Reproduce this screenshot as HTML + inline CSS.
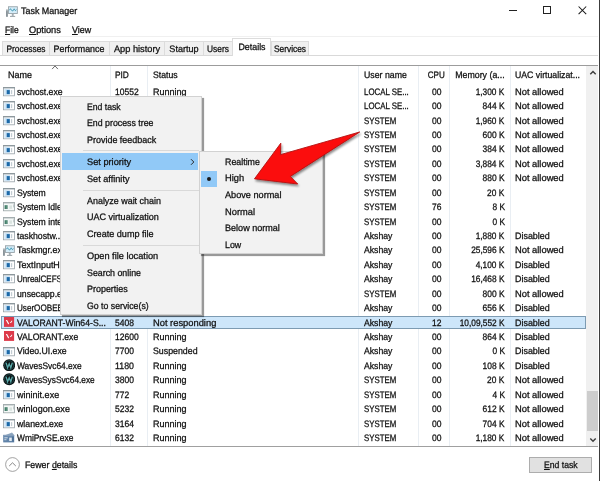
<!DOCTYPE html>
<html><head><meta charset="utf-8"><title>Task Manager</title>
<style>
html,body{margin:0;padding:0}
body{width:600px;height:481px;position:relative;overflow:hidden;background:#fff;font-family:"Liberation Sans",sans-serif;color:#000}
.t{position:absolute;white-space:nowrap;line-height:1em;color:#111;-webkit-text-stroke:0.28px #111;text-rendering:geometricPrecision}
.ic{position:absolute}
.abs{position:absolute}
u{text-decoration:underline;text-underline-offset:1px;text-decoration-thickness:0.8px}
.tab{position:absolute;box-sizing:border-box;background:#f0f0f0;border:1px solid #dcdcdc;border-bottom:none}
.vl{position:absolute;width:1px;background:#e9eef3}
.sep{position:absolute;height:1px;background:#d9d9d9}
</style></head><body>

<div class="abs" style="left:599px;top:0;width:1px;height:481px;background:#3c3c3c"></div>
<svg class="ic" style="left:4.9px;top:6px" width="13" height="12" viewBox="0 0 13 12"><rect x="3.45" y="0.75" width="8.9" height="6.7" fill="#d4ecf8" stroke="#98a3a9" stroke-width="0.9"/><path d="M4.3 4.3 L5.5 2.7 L6.7 4.5 L7.8 5 L9.2 2.8 L10.4 4.7 L11.5 3.6" fill="none" stroke="#2a8aa8" stroke-width="0.8"/><rect x="6.8" y="7.9" width="1.9" height="2" fill="#a3adb2"/><rect x="5" y="9.9" width="5.2" height="0.9" fill="#8d979c"/><rect x="1" y="3.6" width="1.9" height="7.2" fill="#8a949a"/><rect x="1.4" y="4.4" width="1.1" height="0.7" fill="#dfe5e8"/></svg>
<span class="t " style="left:21.1px;top:6px;font-size:9.4px;transform:scaleX(0.953);transform-origin:0 0;">Task Manager</span>
<div class="abs" style="left:509px;top:9.6px;width:8px;height:1px;background:#222"></div>
<div class="abs" style="left:542.8px;top:6px;width:8px;height:8px;box-sizing:border-box;border:1px solid #222"></div>
<svg class="ic" style="left:577.6px;top:5.8px" width="9" height="9" viewBox="0 0 9 9"><path d="M0.6 0.5 L8.2 8.1 M8.2 0.5 L0.6 8.1" stroke="#1a1a1a" stroke-width="1.05" fill="none"/></svg>
<span class="t " style="left:4.6px;top:25px;font-size:9.4px;transform:scaleX(0.901);transform-origin:0 0;"><u>F</u>ile</span>
<span class="t " style="left:29.2px;top:25px;font-size:9.4px;transform:scaleX(0.985);transform-origin:0 0;"><u>O</u>ptions</span>
<span class="t " style="left:71.7px;top:25px;font-size:9.4px;transform:scaleX(0.952);transform-origin:0 0;"><u>V</u>iew</span>
<div class="abs" style="left:0;top:35.6px;width:598px;height:1px;background:#f0f0f0"></div>
<div class="abs" style="left:0;top:55px;width:598px;height:1px;background:#d9d9d9"></div>
<div class="tab" style="left:2px;top:40.5px;width:47.5px;height:14.6px"></div>
<span class="t " style="left:-74.25px;width:200px;text-align:center;top:44px;font-size:9.4px;transform:scaleX(0.889);transform-origin:50% 0;">Processes</span>
<div class="tab" style="left:48.5px;top:40.5px;width:61.5px;height:14.6px"></div>
<span class="t " style="left:-20.75px;width:200px;text-align:center;top:44px;font-size:9.4px;transform:scaleX(0.949);transform-origin:50% 0;">Performance</span>
<div class="tab" style="left:109px;top:40.5px;width:56px;height:14.6px"></div>
<span class="t " style="left:37.0px;width:200px;text-align:center;top:44px;font-size:9.4px;transform:scaleX(0.986);transform-origin:50% 0;">App history</span>
<div class="tab" style="left:164px;top:40.5px;width:39.69999999999999px;height:14.6px"></div>
<span class="t " style="left:83.85px;width:200px;text-align:center;top:44px;font-size:9.4px;transform:scaleX(0.968);transform-origin:50% 0;">Startup</span>
<div class="tab" style="left:202.7px;top:40.5px;width:31.0px;height:14.6px"></div>
<span class="t " style="left:118.19999999999999px;width:200px;text-align:center;top:44px;font-size:9.4px;transform:scaleX(0.894);transform-origin:50% 0;">Users</span>
<div class="tab" style="left:232.2px;top:38.3px;width:39.30000000000001px;height:17.8px;background:#fff"></div>
<span class="t " style="left:152.1px;width:200px;text-align:center;top:42px;font-size:9.4px;transform:scaleX(0.946);transform-origin:50% 0;">Details</span>
<div class="tab" style="left:270.5px;top:40.5px;width:38.0px;height:14.6px"></div>
<span class="t " style="left:189.5px;width:200px;text-align:center;top:44px;font-size:9.4px;transform:scaleX(0.894);transform-origin:50% 0;">Services</span>
<div class="abs" style="left:0;top:65px;width:598px;height:1px;background:#9c9c9c"></div>
<div class="abs" style="left:0;top:446px;width:598px;height:1px;background:#a0a0a0"></div>
<div class="vl" style="left:110px;top:65.6px;height:380px"></div>
<div class="vl" style="left:147.4px;top:65.6px;height:380px"></div>
<div class="vl" style="left:358px;top:65.6px;height:380px"></div>
<div class="vl" style="left:418px;top:65.6px;height:380px"></div>
<div class="vl" style="left:449.4px;top:65.6px;height:380px"></div>
<div class="vl" style="left:510px;top:65.6px;height:380px"></div>
<span class="t " style="left:8px;top:70px;font-size:9.4px;transform:scaleX(0.960);transform-origin:0 0;">Name</span>
<span class="t " style="left:115px;top:70px;font-size:9.4px;transform:scaleX(0.889);transform-origin:0 0;">PID</span>
<span class="t " style="left:153px;top:70px;font-size:9.4px;transform:scaleX(0.927);transform-origin:0 0;">Status</span>
<span class="t " style="left:363.6px;top:70px;font-size:9.4px;transform:scaleX(0.935);transform-origin:0 0;">User name</span>
<span class="t " style="right:155.39999999999998px;top:70px;font-size:9.4px;transform:scaleX(0.859);transform-origin:100% 0;">CPU</span>
<span class="t " style="right:95.39999999999998px;top:70px;font-size:9.4px;transform:scaleX(0.939);transform-origin:100% 0;">Memory (a...</span>
<span class="t " style="left:515.4px;top:70px;font-size:9.4px;transform:scaleX(0.931);transform-origin:0 0;">UAC virtualizat...</span>
<svg class="ic" style="left:51.1px;top:65px" width="8" height="5" viewBox="0 0 8 5"><path d="M1.1 4.1 L4 0.9 L6.9 4.1" stroke="#6a6a6a" stroke-width="1" fill="none"/></svg>
<div class="abs" style="left:585.5px;top:65.6px;width:12.7px;height:380.4px;background:#f0f0f0"></div>
<div class="abs" style="left:587.2px;top:391.4px;width:10.6px;height:39.8px;background:#cdcdcd"></div>
<svg class="ic" style="left:588.9px;top:70.2px" width="8" height="6" viewBox="0 0 8 6"><path d="M1.3 4.2 L4 1.4 L6.7 4.2" stroke="#3c3c3c" stroke-width="1.4" fill="none"/></svg>
<svg class="ic" style="left:588.7px;top:436.9px" width="8" height="6" viewBox="0 0 8 6"><path d="M1.3 1.4 L4 4.2 L6.7 1.4" stroke="#3c3c3c" stroke-width="1.4" fill="none"/></svg>
<svg class="ic" style="left:3.1px;top:86.9px" width="12" height="10" viewBox="0 0 12 10"><rect x="0.45" y="0.5" width="11.1" height="8.3" fill="#fff" stroke="#97a1a7" stroke-width="0.8"/><rect x="0.1" y="0.1" width="11.8" height="1.3" fill="#8a959b"/><rect x="1.3" y="1.9" width="5.6" height="6.3" fill="#cfe5f6"/><rect x="3.7" y="3.1" width="3.1" height="4" fill="#1c69a8"/><rect x="7.9" y="3.1" width="1.3" height="4" fill="#c3ccd2"/></svg>
<span class="t " style="left:17px;top:87px;font-size:9.4px;transform:scaleX(0.919);transform-origin:0 0;">svchost.exe</span>
<span class="t " style="left:115px;top:87px;font-size:9.4px;transform:scaleX(0.907);transform-origin:0 0;">10552</span>
<span class="t " style="left:153px;top:87px;font-size:9.4px;transform:scaleX(0.961);transform-origin:0 0;">Running</span>
<span class="t " style="left:363.6px;top:87px;font-size:9.4px;transform:scaleX(0.840);transform-origin:0 0;">LOCAL SE...</span>
<span class="t " style="right:158.60000000000002px;top:87px;font-size:9.4px;transform:scaleX(0.907);transform-origin:100% 0;">00</span>
<span class="t " style="right:95.39999999999998px;top:87px;font-size:9.4px;transform:scaleX(0.887);transform-origin:100% 0;">1,300 K</span>
<span class="t " style="left:515.4px;top:87px;font-size:9.4px;transform:scaleX(0.995);transform-origin:0 0;">Not allowed</span>
<svg class="ic" style="left:3.1px;top:101.33000000000001px" width="12" height="10" viewBox="0 0 12 10"><rect x="0.45" y="0.5" width="11.1" height="8.3" fill="#fff" stroke="#97a1a7" stroke-width="0.8"/><rect x="0.1" y="0.1" width="11.8" height="1.3" fill="#8a959b"/><rect x="1.3" y="1.9" width="5.6" height="6.3" fill="#cfe5f6"/><rect x="3.7" y="3.1" width="3.1" height="4" fill="#1c69a8"/><rect x="7.9" y="3.1" width="1.3" height="4" fill="#c3ccd2"/></svg>
<span class="t " style="left:17px;top:101px;font-size:9.4px;transform:scaleX(0.919);transform-origin:0 0;">svchost.exe</span>
<span class="t " style="left:115px;top:101px;font-size:9.4px;transform:scaleX(0.907);transform-origin:0 0;">10580</span>
<span class="t " style="left:153px;top:101px;font-size:9.4px;transform:scaleX(0.961);transform-origin:0 0;">Running</span>
<span class="t " style="left:363.6px;top:101px;font-size:9.4px;transform:scaleX(0.840);transform-origin:0 0;">LOCAL SE...</span>
<span class="t " style="right:158.60000000000002px;top:101px;font-size:9.4px;transform:scaleX(0.907);transform-origin:100% 0;">00</span>
<span class="t " style="right:95.39999999999998px;top:101px;font-size:9.4px;transform:scaleX(0.897);transform-origin:100% 0;">844 K</span>
<span class="t " style="left:515.4px;top:101px;font-size:9.4px;transform:scaleX(0.995);transform-origin:0 0;">Not allowed</span>
<svg class="ic" style="left:3.1px;top:115.76px" width="12" height="10" viewBox="0 0 12 10"><rect x="0.45" y="0.5" width="11.1" height="8.3" fill="#fff" stroke="#97a1a7" stroke-width="0.8"/><rect x="0.1" y="0.1" width="11.8" height="1.3" fill="#8a959b"/><rect x="1.3" y="1.9" width="5.6" height="6.3" fill="#cfe5f6"/><rect x="3.7" y="3.1" width="3.1" height="4" fill="#1c69a8"/><rect x="7.9" y="3.1" width="1.3" height="4" fill="#c3ccd2"/></svg>
<span class="t " style="left:17px;top:116px;font-size:9.4px;transform:scaleX(0.919);transform-origin:0 0;">svchost.exe</span>
<span class="t " style="left:115px;top:116px;font-size:9.4px;transform:scaleX(0.907);transform-origin:0 0;">10700</span>
<span class="t " style="left:153px;top:116px;font-size:9.4px;transform:scaleX(0.961);transform-origin:0 0;">Running</span>
<span class="t " style="left:363.6px;top:116px;font-size:9.4px;transform:scaleX(0.836);transform-origin:0 0;">SYSTEM</span>
<span class="t " style="right:158.60000000000002px;top:116px;font-size:9.4px;transform:scaleX(0.907);transform-origin:100% 0;">00</span>
<span class="t " style="right:95.39999999999998px;top:116px;font-size:9.4px;transform:scaleX(0.887);transform-origin:100% 0;">1,960 K</span>
<span class="t " style="left:515.4px;top:116px;font-size:9.4px;transform:scaleX(0.995);transform-origin:0 0;">Not allowed</span>
<svg class="ic" style="left:3.1px;top:130.19px" width="12" height="10" viewBox="0 0 12 10"><rect x="0.45" y="0.5" width="11.1" height="8.3" fill="#fff" stroke="#97a1a7" stroke-width="0.8"/><rect x="0.1" y="0.1" width="11.8" height="1.3" fill="#8a959b"/><rect x="1.3" y="1.9" width="5.6" height="6.3" fill="#cfe5f6"/><rect x="3.7" y="3.1" width="3.1" height="4" fill="#1c69a8"/><rect x="7.9" y="3.1" width="1.3" height="4" fill="#c3ccd2"/></svg>
<span class="t " style="left:17px;top:130px;font-size:9.4px;transform:scaleX(0.919);transform-origin:0 0;">svchost.exe</span>
<span class="t " style="left:115px;top:130px;font-size:9.4px;transform:scaleX(0.907);transform-origin:0 0;">10812</span>
<span class="t " style="left:153px;top:130px;font-size:9.4px;transform:scaleX(0.961);transform-origin:0 0;">Running</span>
<span class="t " style="left:363.6px;top:130px;font-size:9.4px;transform:scaleX(0.836);transform-origin:0 0;">SYSTEM</span>
<span class="t " style="right:158.60000000000002px;top:130px;font-size:9.4px;transform:scaleX(0.907);transform-origin:100% 0;">00</span>
<span class="t " style="right:95.39999999999998px;top:130px;font-size:9.4px;transform:scaleX(0.897);transform-origin:100% 0;">600 K</span>
<span class="t " style="left:515.4px;top:130px;font-size:9.4px;transform:scaleX(0.995);transform-origin:0 0;">Not allowed</span>
<svg class="ic" style="left:3.1px;top:144.62px" width="12" height="10" viewBox="0 0 12 10"><rect x="0.45" y="0.5" width="11.1" height="8.3" fill="#fff" stroke="#97a1a7" stroke-width="0.8"/><rect x="0.1" y="0.1" width="11.8" height="1.3" fill="#8a959b"/><rect x="1.3" y="1.9" width="5.6" height="6.3" fill="#cfe5f6"/><rect x="3.7" y="3.1" width="3.1" height="4" fill="#1c69a8"/><rect x="7.9" y="3.1" width="1.3" height="4" fill="#c3ccd2"/></svg>
<span class="t " style="left:17px;top:144px;font-size:9.4px;transform:scaleX(0.919);transform-origin:0 0;">svchost.exe</span>
<span class="t " style="left:115px;top:144px;font-size:9.4px;transform:scaleX(0.932);transform-origin:0 0;">11024</span>
<span class="t " style="left:153px;top:144px;font-size:9.4px;transform:scaleX(0.961);transform-origin:0 0;">Running</span>
<span class="t " style="left:363.6px;top:144px;font-size:9.4px;transform:scaleX(0.836);transform-origin:0 0;">SYSTEM</span>
<span class="t " style="right:158.60000000000002px;top:144px;font-size:9.4px;transform:scaleX(0.907);transform-origin:100% 0;">00</span>
<span class="t " style="right:95.39999999999998px;top:144px;font-size:9.4px;transform:scaleX(0.897);transform-origin:100% 0;">384 K</span>
<span class="t " style="left:515.4px;top:144px;font-size:9.4px;transform:scaleX(0.995);transform-origin:0 0;">Not allowed</span>
<svg class="ic" style="left:3.1px;top:159.05px" width="12" height="10" viewBox="0 0 12 10"><rect x="0.45" y="0.5" width="11.1" height="8.3" fill="#fff" stroke="#97a1a7" stroke-width="0.8"/><rect x="0.1" y="0.1" width="11.8" height="1.3" fill="#8a959b"/><rect x="1.3" y="1.9" width="5.6" height="6.3" fill="#cfe5f6"/><rect x="3.7" y="3.1" width="3.1" height="4" fill="#1c69a8"/><rect x="7.9" y="3.1" width="1.3" height="4" fill="#c3ccd2"/></svg>
<span class="t " style="left:17px;top:159px;font-size:9.4px;transform:scaleX(0.919);transform-origin:0 0;">svchost.exe</span>
<span class="t " style="left:115px;top:159px;font-size:9.4px;transform:scaleX(0.932);transform-origin:0 0;">11200</span>
<span class="t " style="left:153px;top:159px;font-size:9.4px;transform:scaleX(0.961);transform-origin:0 0;">Running</span>
<span class="t " style="left:363.6px;top:159px;font-size:9.4px;transform:scaleX(0.836);transform-origin:0 0;">SYSTEM</span>
<span class="t " style="right:158.60000000000002px;top:159px;font-size:9.4px;transform:scaleX(0.907);transform-origin:100% 0;">00</span>
<span class="t " style="right:95.39999999999998px;top:159px;font-size:9.4px;transform:scaleX(0.887);transform-origin:100% 0;">3,884 K</span>
<span class="t " style="left:515.4px;top:159px;font-size:9.4px;transform:scaleX(0.995);transform-origin:0 0;">Not allowed</span>
<svg class="ic" style="left:3.1px;top:173.48px" width="12" height="10" viewBox="0 0 12 10"><rect x="0.45" y="0.5" width="11.1" height="8.3" fill="#fff" stroke="#97a1a7" stroke-width="0.8"/><rect x="0.1" y="0.1" width="11.8" height="1.3" fill="#8a959b"/><rect x="1.3" y="1.9" width="5.6" height="6.3" fill="#cfe5f6"/><rect x="3.7" y="3.1" width="3.1" height="4" fill="#1c69a8"/><rect x="7.9" y="3.1" width="1.3" height="4" fill="#c3ccd2"/></svg>
<span class="t " style="left:17px;top:173px;font-size:9.4px;transform:scaleX(0.919);transform-origin:0 0;">svchost.exe</span>
<span class="t " style="left:115px;top:173px;font-size:9.4px;transform:scaleX(0.932);transform-origin:0 0;">11348</span>
<span class="t " style="left:153px;top:173px;font-size:9.4px;transform:scaleX(0.961);transform-origin:0 0;">Running</span>
<span class="t " style="left:363.6px;top:173px;font-size:9.4px;transform:scaleX(0.836);transform-origin:0 0;">SYSTEM</span>
<span class="t " style="right:158.60000000000002px;top:173px;font-size:9.4px;transform:scaleX(0.907);transform-origin:100% 0;">00</span>
<span class="t " style="right:95.39999999999998px;top:173px;font-size:9.4px;transform:scaleX(0.897);transform-origin:100% 0;">880 K</span>
<span class="t " style="left:515.4px;top:173px;font-size:9.4px;transform:scaleX(0.995);transform-origin:0 0;">Not allowed</span>
<svg class="ic" style="left:3.1px;top:187.91px" width="12" height="10" viewBox="0 0 12 10"><rect x="0.45" y="0.5" width="11.1" height="8.3" fill="#fff" stroke="#97a1a7" stroke-width="0.8"/><rect x="0.1" y="0.1" width="11.8" height="1.3" fill="#8a959b"/><rect x="1.3" y="1.9" width="5.6" height="6.3" fill="#cfe5f6"/><rect x="3.7" y="3.1" width="3.1" height="4" fill="#1c69a8"/><rect x="7.9" y="3.1" width="1.3" height="4" fill="#c3ccd2"/></svg>
<span class="t " style="left:17px;top:188px;font-size:9.4px;transform:scaleX(0.919);transform-origin:0 0;">System</span>
<span class="t " style="left:115px;top:188px;font-size:9.4px;transform:scaleX(0.907);transform-origin:0 0;">4</span>
<span class="t " style="left:153px;top:188px;font-size:9.4px;transform:scaleX(0.961);transform-origin:0 0;">Running</span>
<span class="t " style="left:363.6px;top:188px;font-size:9.4px;transform:scaleX(0.836);transform-origin:0 0;">SYSTEM</span>
<span class="t " style="right:158.60000000000002px;top:188px;font-size:9.4px;transform:scaleX(0.907);transform-origin:100% 0;">00</span>
<span class="t " style="right:95.39999999999998px;top:188px;font-size:9.4px;transform:scaleX(0.893);transform-origin:100% 0;">20 K</span>
<svg class="ic" style="left:3.1px;top:202.34px" width="12" height="10" viewBox="0 0 12 10"><rect x="0.45" y="0.5" width="11.1" height="8.3" fill="#f4f8f7" stroke="#9aa3a6" stroke-width="0.8"/><rect x="0.1" y="0.1" width="11.8" height="1.3" fill="#a3acaf"/><rect x="1.6" y="3.2" width="3" height="3.8" fill="#3f7a66"/><rect x="2.9" y="3.2" width="0.5" height="3.8" fill="#7fb09c"/><rect x="6.4" y="3.4" width="2.6" height="3.4" fill="#d9e3df"/><rect x="10" y="2.4" width="0.8" height="3" fill="#b8c2c4"/></svg>
<span class="t " style="left:17px;top:202px;font-size:9.4px;transform:scaleX(0.914);transform-origin:0 0;">System Idle...</span>
<span class="t " style="left:115px;top:202px;font-size:9.4px;transform:scaleX(0.907);transform-origin:0 0;">0</span>
<span class="t " style="left:153px;top:202px;font-size:9.4px;transform:scaleX(0.961);transform-origin:0 0;">Running</span>
<span class="t " style="left:363.6px;top:202px;font-size:9.4px;transform:scaleX(0.836);transform-origin:0 0;">SYSTEM</span>
<span class="t " style="right:158.60000000000002px;top:202px;font-size:9.4px;transform:scaleX(0.907);transform-origin:100% 0;">76</span>
<span class="t " style="right:95.39999999999998px;top:202px;font-size:9.4px;transform:scaleX(0.888);transform-origin:100% 0;">8 K</span>
<svg class="ic" style="left:3.1px;top:216.77px" width="12" height="10" viewBox="0 0 12 10"><rect x="0.45" y="0.5" width="11.1" height="8.3" fill="#f4f8f7" stroke="#9aa3a6" stroke-width="0.8"/><rect x="0.1" y="0.1" width="11.8" height="1.3" fill="#a3acaf"/><rect x="1.6" y="3.2" width="3" height="3.8" fill="#3f7a66"/><rect x="2.9" y="3.2" width="0.5" height="3.8" fill="#7fb09c"/><rect x="6.4" y="3.4" width="2.6" height="3.4" fill="#d9e3df"/><rect x="10" y="2.4" width="0.8" height="3" fill="#b8c2c4"/></svg>
<span class="t " style="left:17px;top:217px;font-size:9.4px;transform:scaleX(0.922);transform-origin:0 0;">System inte...</span>
<span class="t " style="left:115px;top:217px;font-size:9.4px;transform:scaleX(1.165);transform-origin:0 0;">-</span>
<span class="t " style="left:153px;top:217px;font-size:9.4px;transform:scaleX(0.961);transform-origin:0 0;">Running</span>
<span class="t " style="left:363.6px;top:217px;font-size:9.4px;transform:scaleX(0.836);transform-origin:0 0;">SYSTEM</span>
<span class="t " style="right:158.60000000000002px;top:217px;font-size:9.4px;transform:scaleX(0.907);transform-origin:100% 0;">00</span>
<span class="t " style="right:95.39999999999998px;top:217px;font-size:9.4px;transform:scaleX(0.888);transform-origin:100% 0;">0 K</span>
<svg class="ic" style="left:3.1px;top:231.20000000000002px" width="12" height="10" viewBox="0 0 12 10"><rect x="0.45" y="0.5" width="11.1" height="8.3" fill="#fff" stroke="#97a1a7" stroke-width="0.8"/><rect x="0.1" y="0.1" width="11.8" height="1.3" fill="#8a959b"/><rect x="1.3" y="1.9" width="5.6" height="6.3" fill="#cfe5f6"/><rect x="3.7" y="3.1" width="3.1" height="4" fill="#1c69a8"/><rect x="7.9" y="3.1" width="1.3" height="4" fill="#c3ccd2"/></svg>
<span class="t " style="left:17px;top:231px;font-size:9.4px;transform:scaleX(0.930);transform-origin:0 0;">taskhostw....</span>
<span class="t " style="left:115px;top:231px;font-size:9.4px;transform:scaleX(0.907);transform-origin:0 0;">6044</span>
<span class="t " style="left:153px;top:231px;font-size:9.4px;transform:scaleX(0.961);transform-origin:0 0;">Running</span>
<span class="t " style="left:363.6px;top:231px;font-size:9.4px;transform:scaleX(0.924);transform-origin:0 0;">Akshay</span>
<span class="t " style="right:158.60000000000002px;top:231px;font-size:9.4px;transform:scaleX(0.907);transform-origin:100% 0;">00</span>
<span class="t " style="right:95.39999999999998px;top:231px;font-size:9.4px;transform:scaleX(0.887);transform-origin:100% 0;">1,880 K</span>
<span class="t " style="left:515.4px;top:231px;font-size:9.4px;transform:scaleX(0.952);transform-origin:0 0;">Disabled</span>
<svg class="ic" style="left:2.3px;top:245.42999999999998px" width="13" height="12" viewBox="0 0 13 12"><rect x="3.45" y="0.75" width="8.9" height="6.7" fill="#d4ecf8" stroke="#98a3a9" stroke-width="0.9"/><path d="M4.3 4.3 L5.5 2.7 L6.7 4.5 L7.8 5 L9.2 2.8 L10.4 4.7 L11.5 3.6" fill="none" stroke="#2a8aa8" stroke-width="0.8"/><rect x="6.8" y="7.9" width="1.9" height="2" fill="#a3adb2"/><rect x="5" y="9.9" width="5.2" height="0.9" fill="#8d979c"/><rect x="1" y="3.6" width="1.9" height="7.2" fill="#8a949a"/><rect x="1.4" y="4.4" width="1.1" height="0.7" fill="#dfe5e8"/></svg>
<span class="t " style="left:17px;top:245px;font-size:9.4px;transform:scaleX(0.946);transform-origin:0 0;">Taskmgr.exe</span>
<span class="t " style="left:115px;top:245px;font-size:9.4px;transform:scaleX(0.907);transform-origin:0 0;">9120</span>
<span class="t " style="left:153px;top:245px;font-size:9.4px;transform:scaleX(0.961);transform-origin:0 0;">Running</span>
<span class="t " style="left:363.6px;top:245px;font-size:9.4px;transform:scaleX(0.924);transform-origin:0 0;">Akshay</span>
<span class="t " style="right:158.60000000000002px;top:245px;font-size:9.4px;transform:scaleX(0.907);transform-origin:100% 0;">00</span>
<span class="t " style="right:95.39999999999998px;top:245px;font-size:9.4px;transform:scaleX(0.890);transform-origin:100% 0;">25,596 K</span>
<span class="t " style="left:515.4px;top:245px;font-size:9.4px;transform:scaleX(0.995);transform-origin:0 0;">Not allowed</span>
<svg class="ic" style="left:3.1px;top:260.05999999999995px" width="12" height="10" viewBox="0 0 12 10"><rect x="0.45" y="0.5" width="11.1" height="8.3" fill="#fff" stroke="#97a1a7" stroke-width="0.8"/><rect x="0.1" y="0.1" width="11.8" height="1.3" fill="#8a959b"/><rect x="1.3" y="1.9" width="5.6" height="6.3" fill="#cfe5f6"/><rect x="3.7" y="3.1" width="3.1" height="4" fill="#1c69a8"/><rect x="7.9" y="3.1" width="1.3" height="4" fill="#c3ccd2"/></svg>
<span class="t " style="left:17px;top:260px;font-size:9.4px;transform:scaleX(0.956);transform-origin:0 0;">TextInputH...</span>
<span class="t " style="left:115px;top:260px;font-size:9.4px;transform:scaleX(0.907);transform-origin:0 0;">8812</span>
<span class="t " style="left:153px;top:260px;font-size:9.4px;transform:scaleX(0.961);transform-origin:0 0;">Running</span>
<span class="t " style="left:363.6px;top:260px;font-size:9.4px;transform:scaleX(0.924);transform-origin:0 0;">Akshay</span>
<span class="t " style="right:158.60000000000002px;top:260px;font-size:9.4px;transform:scaleX(0.907);transform-origin:100% 0;">00</span>
<span class="t " style="right:95.39999999999998px;top:260px;font-size:9.4px;transform:scaleX(0.887);transform-origin:100% 0;">4,100 K</span>
<span class="t " style="left:515.4px;top:260px;font-size:9.4px;transform:scaleX(0.952);transform-origin:0 0;">Disabled</span>
<svg class="ic" style="left:3.1px;top:274.49px" width="12" height="10" viewBox="0 0 12 10"><rect x="0.45" y="0.5" width="11.1" height="8.3" fill="#fff" stroke="#97a1a7" stroke-width="0.8"/><rect x="0.1" y="0.1" width="11.8" height="1.3" fill="#8a959b"/><rect x="1.3" y="1.9" width="5.6" height="6.3" fill="#cfe5f6"/><rect x="3.7" y="3.1" width="3.1" height="4" fill="#1c69a8"/><rect x="7.9" y="3.1" width="1.3" height="4" fill="#c3ccd2"/></svg>
<span class="t " style="left:17px;top:274px;font-size:9.4px;transform:scaleX(0.853);transform-origin:0 0;">UnrealCEFS...</span>
<span class="t " style="left:115px;top:274px;font-size:9.4px;transform:scaleX(0.907);transform-origin:0 0;">7420</span>
<span class="t " style="left:153px;top:274px;font-size:9.4px;transform:scaleX(0.961);transform-origin:0 0;">Running</span>
<span class="t " style="left:363.6px;top:274px;font-size:9.4px;transform:scaleX(0.924);transform-origin:0 0;">Akshay</span>
<span class="t " style="right:158.60000000000002px;top:274px;font-size:9.4px;transform:scaleX(0.907);transform-origin:100% 0;">00</span>
<span class="t " style="right:95.39999999999998px;top:274px;font-size:9.4px;transform:scaleX(0.890);transform-origin:100% 0;">16,468 K</span>
<span class="t " style="left:515.4px;top:274px;font-size:9.4px;transform:scaleX(0.952);transform-origin:0 0;">Disabled</span>
<svg class="ic" style="left:3.1px;top:288.91999999999996px" width="12" height="10" viewBox="0 0 12 10"><rect x="0.45" y="0.5" width="11.1" height="8.3" fill="#fff" stroke="#97a1a7" stroke-width="0.8"/><rect x="0.1" y="0.1" width="11.8" height="1.3" fill="#8a959b"/><rect x="1.3" y="1.9" width="5.6" height="6.3" fill="#cfe5f6"/><rect x="3.7" y="3.1" width="3.1" height="4" fill="#1c69a8"/><rect x="7.9" y="3.1" width="1.3" height="4" fill="#c3ccd2"/></svg>
<span class="t " style="left:17px;top:289px;font-size:9.4px;transform:scaleX(0.927);transform-origin:0 0;">unsecapp.exe</span>
<span class="t " style="left:115px;top:289px;font-size:9.4px;transform:scaleX(0.907);transform-origin:0 0;">5120</span>
<span class="t " style="left:153px;top:289px;font-size:9.4px;transform:scaleX(0.961);transform-origin:0 0;">Running</span>
<span class="t " style="left:363.6px;top:289px;font-size:9.4px;transform:scaleX(0.836);transform-origin:0 0;">SYSTEM</span>
<span class="t " style="right:158.60000000000002px;top:289px;font-size:9.4px;transform:scaleX(0.907);transform-origin:100% 0;">00</span>
<span class="t " style="right:95.39999999999998px;top:289px;font-size:9.4px;transform:scaleX(0.897);transform-origin:100% 0;">800 K</span>
<span class="t " style="left:515.4px;top:289px;font-size:9.4px;transform:scaleX(0.995);transform-origin:0 0;">Not allowed</span>
<svg class="ic" style="left:3.1px;top:303.34999999999997px" width="12" height="10" viewBox="0 0 12 10"><rect x="0.45" y="0.5" width="11.1" height="8.3" fill="#fff" stroke="#97a1a7" stroke-width="0.8"/><rect x="0.1" y="0.1" width="11.8" height="1.3" fill="#8a959b"/><rect x="1.3" y="1.9" width="5.6" height="6.3" fill="#cfe5f6"/><rect x="3.7" y="3.1" width="3.1" height="4" fill="#1c69a8"/><rect x="7.9" y="3.1" width="1.3" height="4" fill="#c3ccd2"/></svg>
<span class="t " style="left:17px;top:303px;font-size:9.4px;transform:scaleX(0.865);transform-origin:0 0;">UserOOBEB...</span>
<span class="t " style="left:115px;top:303px;font-size:9.4px;transform:scaleX(0.907);transform-origin:0 0;">9944</span>
<span class="t " style="left:153px;top:303px;font-size:9.4px;transform:scaleX(0.961);transform-origin:0 0;">Running</span>
<span class="t " style="left:363.6px;top:303px;font-size:9.4px;transform:scaleX(0.924);transform-origin:0 0;">Akshay</span>
<span class="t " style="right:158.60000000000002px;top:303px;font-size:9.4px;transform:scaleX(0.907);transform-origin:100% 0;">00</span>
<span class="t " style="right:95.39999999999998px;top:303px;font-size:9.4px;transform:scaleX(0.897);transform-origin:100% 0;">656 K</span>
<span class="t " style="left:515.4px;top:303px;font-size:9.4px;transform:scaleX(0.952);transform-origin:0 0;">Disabled</span>
<div class="abs" style="left:1px;top:316px;width:584.8px;height:12.9px;box-sizing:border-box;background:#cde6fa;border:1px solid #7d9bb2"></div>
<svg class="ic" style="left:4px;top:316.97999999999996px" width="11" height="11" viewBox="0 0 11 11"><rect x="0" y="0" width="10.1" height="9.9" fill="#dd3a4a"/><path d="M1.8 3 L3.1 3 L5.1 6.5 L4.3 7.5 Z M8.1 3.3 L8.1 4.7 L6.9 6.1 L5.8 5.9 Z" fill="#fff"/></svg>
<span class="t " style="left:17px;top:318px;font-size:9.4px;transform:scaleX(0.924);transform-origin:0 0;">VALORANT-Win64-S...</span>
<span class="t " style="left:115px;top:318px;font-size:9.4px;transform:scaleX(0.907);transform-origin:0 0;">5408</span>
<span class="t " style="left:153px;top:318px;font-size:9.4px;transform:scaleX(0.996);transform-origin:0 0;">Not responding</span>
<span class="t " style="left:363.6px;top:318px;font-size:9.4px;transform:scaleX(0.924);transform-origin:0 0;">Akshay</span>
<span class="t " style="right:158.60000000000002px;top:318px;font-size:9.4px;transform:scaleX(0.907);transform-origin:100% 0;">12</span>
<span class="t " style="right:95.39999999999998px;top:318px;font-size:9.4px;transform:scaleX(0.887);transform-origin:100% 0;">10,09,552 K</span>
<span class="t " style="left:515.4px;top:318px;font-size:9.4px;transform:scaleX(0.952);transform-origin:0 0;">Disabled</span>
<svg class="ic" style="left:4px;top:331.40999999999997px" width="11" height="11" viewBox="0 0 11 11"><rect x="0" y="0" width="10.1" height="9.9" fill="#dd3a4a"/><path d="M1.8 3 L3.1 3 L5.1 6.5 L4.3 7.5 Z M8.1 3.3 L8.1 4.7 L6.9 6.1 L5.8 5.9 Z" fill="#fff"/></svg>
<span class="t " style="left:17px;top:332px;font-size:9.4px;transform:scaleX(0.920);transform-origin:0 0;">VALORANT.exe</span>
<span class="t " style="left:115px;top:332px;font-size:9.4px;transform:scaleX(0.907);transform-origin:0 0;">12600</span>
<span class="t " style="left:153px;top:332px;font-size:9.4px;transform:scaleX(0.961);transform-origin:0 0;">Running</span>
<span class="t " style="left:363.6px;top:332px;font-size:9.4px;transform:scaleX(0.924);transform-origin:0 0;">Akshay</span>
<span class="t " style="right:158.60000000000002px;top:332px;font-size:9.4px;transform:scaleX(0.907);transform-origin:100% 0;">00</span>
<span class="t " style="right:95.39999999999998px;top:332px;font-size:9.4px;transform:scaleX(0.897);transform-origin:100% 0;">864 K</span>
<span class="t " style="left:515.4px;top:332px;font-size:9.4px;transform:scaleX(0.952);transform-origin:0 0;">Disabled</span>
<svg class="ic" style="left:3.1px;top:346.64px" width="12" height="10" viewBox="0 0 12 10"><rect x="0.45" y="0.5" width="11.1" height="8.3" fill="#fff" stroke="#97a1a7" stroke-width="0.8"/><rect x="0.1" y="0.1" width="11.8" height="1.3" fill="#8a959b"/><rect x="1.3" y="1.9" width="5.6" height="6.3" fill="#cfe5f6"/><rect x="3.7" y="3.1" width="3.1" height="4" fill="#1c69a8"/><rect x="7.9" y="3.1" width="1.3" height="4" fill="#c3ccd2"/></svg>
<span class="t " style="left:17px;top:346px;font-size:9.4px;transform:scaleX(0.927);transform-origin:0 0;">Video.UI.exe</span>
<span class="t " style="left:115px;top:346px;font-size:9.4px;transform:scaleX(0.907);transform-origin:0 0;">7700</span>
<span class="t " style="left:153px;top:346px;font-size:9.4px;transform:scaleX(0.939);transform-origin:0 0;">Suspended</span>
<span class="t " style="left:363.6px;top:346px;font-size:9.4px;transform:scaleX(0.924);transform-origin:0 0;">Akshay</span>
<span class="t " style="right:158.60000000000002px;top:346px;font-size:9.4px;transform:scaleX(0.907);transform-origin:100% 0;">00</span>
<span class="t " style="right:95.39999999999998px;top:346px;font-size:9.4px;transform:scaleX(0.888);transform-origin:100% 0;">0 K</span>
<span class="t " style="left:515.4px;top:346px;font-size:9.4px;transform:scaleX(0.952);transform-origin:0 0;">Disabled</span>
<svg class="ic" style="left:2.8px;top:358.97px" width="12.4" height="12.4" viewBox="-6.2 -6.2 12.4 12.4"><circle cx="0" cy="0" r="6" fill="#0b1315"/><circle cx="0" cy="0" r="4.6" fill="none" stroke="#1f484a" stroke-width="0.9"/><path d="M-3.1 -2.4 L-1.6 2.5 L0 -1.5 L1.6 2.5 L3.1 -2.4" fill="none" stroke="#5aaaab" stroke-width="1.3"/></svg>
<span class="t " style="left:17px;top:361px;font-size:9.4px;transform:scaleX(0.897);transform-origin:0 0;">WavesSvc64.exe</span>
<span class="t " style="left:115px;top:361px;font-size:9.4px;transform:scaleX(0.938);transform-origin:0 0;">1180</span>
<span class="t " style="left:153px;top:361px;font-size:9.4px;transform:scaleX(0.961);transform-origin:0 0;">Running</span>
<span class="t " style="left:363.6px;top:361px;font-size:9.4px;transform:scaleX(0.924);transform-origin:0 0;">Akshay</span>
<span class="t " style="right:158.60000000000002px;top:361px;font-size:9.4px;transform:scaleX(0.907);transform-origin:100% 0;">00</span>
<span class="t " style="right:95.39999999999998px;top:361px;font-size:9.4px;transform:scaleX(0.897);transform-origin:100% 0;">108 K</span>
<span class="t " style="left:515.4px;top:361px;font-size:9.4px;transform:scaleX(0.952);transform-origin:0 0;">Disabled</span>
<svg class="ic" style="left:2.8px;top:373.40000000000003px" width="12.4" height="12.4" viewBox="-6.2 -6.2 12.4 12.4"><circle cx="0" cy="0" r="6" fill="#0b1315"/><circle cx="0" cy="0" r="4.6" fill="none" stroke="#1f484a" stroke-width="0.9"/><path d="M-3.1 -2.4 L-1.6 2.5 L0 -1.5 L1.6 2.5 L3.1 -2.4" fill="none" stroke="#5aaaab" stroke-width="1.3"/></svg>
<span class="t " style="left:17px;top:375px;font-size:9.4px;transform:scaleX(0.886);transform-origin:0 0;">WavesSysSvc64.exe</span>
<span class="t " style="left:115px;top:375px;font-size:9.4px;transform:scaleX(0.907);transform-origin:0 0;">3800</span>
<span class="t " style="left:153px;top:375px;font-size:9.4px;transform:scaleX(0.961);transform-origin:0 0;">Running</span>
<span class="t " style="left:363.6px;top:375px;font-size:9.4px;transform:scaleX(0.836);transform-origin:0 0;">SYSTEM</span>
<span class="t " style="right:158.60000000000002px;top:375px;font-size:9.4px;transform:scaleX(0.907);transform-origin:100% 0;">00</span>
<span class="t " style="right:95.39999999999998px;top:375px;font-size:9.4px;transform:scaleX(0.893);transform-origin:100% 0;">20 K</span>
<span class="t " style="left:515.4px;top:375px;font-size:9.4px;transform:scaleX(0.995);transform-origin:0 0;">Not allowed</span>
<svg class="ic" style="left:3.1px;top:389.92999999999995px" width="12" height="10" viewBox="0 0 12 10"><rect x="0.45" y="0.5" width="11.1" height="8.3" fill="#fff" stroke="#97a1a7" stroke-width="0.8"/><rect x="0.1" y="0.1" width="11.8" height="1.3" fill="#8a959b"/><rect x="1.3" y="1.9" width="5.6" height="6.3" fill="#cfe5f6"/><rect x="3.7" y="3.1" width="3.1" height="4" fill="#1c69a8"/><rect x="7.9" y="3.1" width="1.3" height="4" fill="#c3ccd2"/></svg>
<span class="t " style="left:17px;top:390px;font-size:9.4px;transform:scaleX(0.964);transform-origin:0 0;">wininit.exe</span>
<span class="t " style="left:115px;top:390px;font-size:9.4px;transform:scaleX(0.907);transform-origin:0 0;">772</span>
<span class="t " style="left:153px;top:390px;font-size:9.4px;transform:scaleX(0.961);transform-origin:0 0;">Running</span>
<span class="t " style="left:363.6px;top:390px;font-size:9.4px;transform:scaleX(0.836);transform-origin:0 0;">SYSTEM</span>
<span class="t " style="right:158.60000000000002px;top:390px;font-size:9.4px;transform:scaleX(0.907);transform-origin:100% 0;">00</span>
<span class="t " style="right:95.39999999999998px;top:390px;font-size:9.4px;transform:scaleX(0.888);transform-origin:100% 0;">4 K</span>
<span class="t " style="left:515.4px;top:390px;font-size:9.4px;transform:scaleX(0.995);transform-origin:0 0;">Not allowed</span>
<svg class="ic" style="left:3.1px;top:404.35999999999996px" width="12" height="10" viewBox="0 0 12 10"><rect x="0.45" y="0.5" width="11.1" height="8.3" fill="#f4f8f7" stroke="#9aa3a6" stroke-width="0.8"/><rect x="0.1" y="0.1" width="11.8" height="1.3" fill="#a3acaf"/><rect x="1.6" y="3.2" width="3" height="3.8" fill="#3f7a66"/><rect x="2.9" y="3.2" width="0.5" height="3.8" fill="#7fb09c"/><rect x="6.4" y="3.4" width="2.6" height="3.4" fill="#d9e3df"/><rect x="10" y="2.4" width="0.8" height="3" fill="#b8c2c4"/></svg>
<span class="t " style="left:17px;top:404px;font-size:9.4px;transform:scaleX(0.967);transform-origin:0 0;">winlogon.exe</span>
<span class="t " style="left:115px;top:404px;font-size:9.4px;transform:scaleX(0.907);transform-origin:0 0;">5232</span>
<span class="t " style="left:153px;top:404px;font-size:9.4px;transform:scaleX(0.961);transform-origin:0 0;">Running</span>
<span class="t " style="left:363.6px;top:404px;font-size:9.4px;transform:scaleX(0.836);transform-origin:0 0;">SYSTEM</span>
<span class="t " style="right:158.60000000000002px;top:404px;font-size:9.4px;transform:scaleX(0.907);transform-origin:100% 0;">00</span>
<span class="t " style="right:95.39999999999998px;top:404px;font-size:9.4px;transform:scaleX(0.897);transform-origin:100% 0;">612 K</span>
<span class="t " style="left:515.4px;top:404px;font-size:9.4px;transform:scaleX(0.995);transform-origin:0 0;">Not allowed</span>
<svg class="ic" style="left:3.1px;top:418.78999999999996px" width="12" height="10" viewBox="0 0 12 10"><rect x="0.45" y="0.5" width="11.1" height="8.3" fill="#fff" stroke="#97a1a7" stroke-width="0.8"/><rect x="0.1" y="0.1" width="11.8" height="1.3" fill="#8a959b"/><rect x="1.3" y="1.9" width="5.6" height="6.3" fill="#cfe5f6"/><rect x="3.7" y="3.1" width="3.1" height="4" fill="#1c69a8"/><rect x="7.9" y="3.1" width="1.3" height="4" fill="#c3ccd2"/></svg>
<span class="t " style="left:17px;top:419px;font-size:9.4px;transform:scaleX(0.934);transform-origin:0 0;">wlanext.exe</span>
<span class="t " style="left:115px;top:419px;font-size:9.4px;transform:scaleX(0.907);transform-origin:0 0;">3164</span>
<span class="t " style="left:153px;top:419px;font-size:9.4px;transform:scaleX(0.961);transform-origin:0 0;">Running</span>
<span class="t " style="left:363.6px;top:419px;font-size:9.4px;transform:scaleX(0.836);transform-origin:0 0;">SYSTEM</span>
<span class="t " style="right:158.60000000000002px;top:419px;font-size:9.4px;transform:scaleX(0.907);transform-origin:100% 0;">00</span>
<span class="t " style="right:95.39999999999998px;top:419px;font-size:9.4px;transform:scaleX(0.897);transform-origin:100% 0;">704 K</span>
<span class="t " style="left:515.4px;top:419px;font-size:9.4px;transform:scaleX(0.995);transform-origin:0 0;">Not allowed</span>
<svg class="ic" style="left:3px;top:431.52px" width="12" height="11" viewBox="0 0 12 11"><path d="M2.6 3 L9 0.4 L10.6 2.2 L10.6 3.2 Z" fill="#8fa7c0"/><rect x="0.2" y="2.9" width="11" height="7.5" fill="#5f82a8"/><rect x="0.2" y="2.9" width="11" height="1.4" fill="#86a0bc"/><rect x="1.3" y="5.4" width="3.4" height="0.9" fill="#e8eef4"/><rect x="1.3" y="7.3" width="2.2" height="0.9" fill="#d7e0ea"/><rect x="6.2" y="5.6" width="2.6" height="3.4" fill="#e3eaf2"/><rect x="9.4" y="4.6" width="1.2" height="5.2" fill="#486a90"/></svg>
<span class="t " style="left:17px;top:433px;font-size:9.4px;transform:scaleX(0.893);transform-origin:0 0;">WmiPrvSE.exe</span>
<span class="t " style="left:115px;top:433px;font-size:9.4px;transform:scaleX(0.907);transform-origin:0 0;">6132</span>
<span class="t " style="left:153px;top:433px;font-size:9.4px;transform:scaleX(0.961);transform-origin:0 0;">Running</span>
<span class="t " style="left:363.6px;top:433px;font-size:9.4px;transform:scaleX(0.836);transform-origin:0 0;">SYSTEM</span>
<span class="t " style="right:158.60000000000002px;top:433px;font-size:9.4px;transform:scaleX(0.907);transform-origin:100% 0;">00</span>
<span class="t " style="right:95.39999999999998px;top:433px;font-size:9.4px;transform:scaleX(0.887);transform-origin:100% 0;">1,180 K</span>
<span class="t " style="left:515.4px;top:433px;font-size:9.4px;transform:scaleX(0.995);transform-origin:0 0;">Not allowed</span>
<div class="abs" style="left:60.4px;top:96.2px;width:141.8px;height:218.4px;box-sizing:border-box;background:#f2f2f2;border:1px solid #d2d2d2;box-shadow:2px 2px 0.8px rgba(0,0,0,.4)"></div>
<div class="abs" style="left:62.2px;top:153.4px;width:136px;height:16.5px;background:#91c9f7"></div>
<span class="t " style="left:87px;top:102px;font-size:9.4px;transform:scaleX(0.923);transform-origin:0 0;">End task</span>
<span class="t " style="left:87px;top:118px;font-size:9.4px;transform:scaleX(0.937);transform-origin:0 0;">End process tree</span>
<span class="t " style="left:87px;top:135px;font-size:9.4px;transform:scaleX(0.955);transform-origin:0 0;">Provide feedback</span>
<span class="t " style="left:87px;top:157px;font-size:9.4px;transform:scaleX(0.983);transform-origin:0 0;">Set priority</span>
<span class="t " style="left:87px;top:174px;font-size:9.4px;transform:scaleX(0.975);transform-origin:0 0;">Set affinity</span>
<span class="t " style="left:87px;top:196px;font-size:9.4px;transform:scaleX(0.952);transform-origin:0 0;">Analyze wait chain</span>
<span class="t " style="left:87px;top:212px;font-size:9.4px;transform:scaleX(0.963);transform-origin:0 0;">UAC virtualization</span>
<span class="t " style="left:87px;top:229px;font-size:9.4px;transform:scaleX(0.969);transform-origin:0 0;">Create dump file</span>
<span class="t " style="left:87px;top:251px;font-size:9.4px;transform:scaleX(0.983);transform-origin:0 0;">Open file location</span>
<span class="t " style="left:87px;top:268px;font-size:9.4px;transform:scaleX(0.942);transform-origin:0 0;">Search online</span>
<span class="t " style="left:87px;top:284px;font-size:9.4px;transform:scaleX(0.954);transform-origin:0 0;">Properties</span>
<span class="t " style="left:87px;top:301px;font-size:9.4px;transform:scaleX(0.932);transform-origin:0 0;">Go to service(s)</span>
<div class="sep" style="left:83px;top:150px;width:116px"></div>
<div class="sep" style="left:83px;top:190px;width:116px"></div>
<div class="sep" style="left:83px;top:245.3px;width:116px"></div>
<svg class="ic" style="left:189.5px;top:158px" width="5" height="8" viewBox="0 0 5 8"><path d="M1 1.2 L3.8 4 L1 6.8" stroke="#2a2a2a" stroke-width="1" fill="none"/></svg>
<div class="abs" style="left:198.8px;top:151.2px;width:124.4px;height:103.2px;box-sizing:border-box;background:#f2f2f2;border:1px solid #d2d2d2;box-shadow:2px 2px 0.8px rgba(0,0,0,.4)"></div>
<div class="abs" style="left:201.2px;top:170.7px;width:15.5px;height:16.5px;background:#91c9f7"></div>
<div class="abs" style="left:206.6px;top:176.6px;width:4.2px;height:4.2px;border-radius:50%;background:#1a1a1a"></div>
<span class="t " style="left:225.2px;top:157px;font-size:9.4px;transform:scaleX(0.943);transform-origin:0 0;">Realtime</span>
<span class="t " style="left:225.2px;top:173px;font-size:9.4px;transform:scaleX(0.993);transform-origin:0 0;">High</span>
<span class="t " style="left:225.2px;top:190px;font-size:9.4px;transform:scaleX(0.976);transform-origin:0 0;">Above normal</span>
<span class="t " style="left:225.2px;top:207px;font-size:9.4px;transform:scaleX(0.991);transform-origin:0 0;">Normal</span>
<span class="t " style="left:225.2px;top:223px;font-size:9.4px;transform:scaleX(0.966);transform-origin:0 0;">Below normal</span>
<span class="t " style="left:225.2px;top:240px;font-size:9.4px;transform:scaleX(0.941);transform-origin:0 0;">Low</span>
<svg class="ic" style="left:240px;top:120px" width="130" height="75" viewBox="240 120 130 75"><defs><filter id="sh" x="-10%" y="-10%" width="130%" height="140%"><feGaussianBlur in="SourceAlpha" stdDeviation="1.2"/><feOffset dx="1" dy="1.5"/><feComponentTransfer><feFuncA type="linear" slope="0.45"/></feComponentTransfer><feMerge><feMergeNode/><feMergeNode in="SourceGraphic"/></feMerge></filter></defs><path filter="url(#sh)" d="M254.5 178.8 L280.8 143.2 L280.4 154.7 L359.7 132 L290.3 176.4 L297.7 184 Z" fill="#fb0a0a" stroke="#b40a0a" stroke-width="0.9" stroke-linejoin="round"/></svg>
<svg class="ic" style="left:4.8px;top:457px" width="15" height="15" viewBox="0 0 15 15"><circle cx="7.5" cy="7.5" r="6.9" fill="#fff" stroke="#8a8a8a" stroke-width="0.8"/><path d="M4.2 9 L7.5 5.8 L10.8 9" stroke="#777" stroke-width="0.9" fill="none"/></svg>
<span class="t " style="left:25.3px;top:460px;font-size:9.4px;transform:scaleX(0.938);transform-origin:0 0;">Fewer <u>d</u>etails</span>
<div class="abs" style="left:529px;top:456.5px;width:63px;height:16.4px;box-sizing:border-box;background:#e1e1e1;border:1px solid #adadad"></div>
<span class="t " style="left:544px;top:460px;font-size:9.4px;transform:scaleX(0.923);transform-origin:0 0;"><u>E</u>nd task</span>
</body></html>
